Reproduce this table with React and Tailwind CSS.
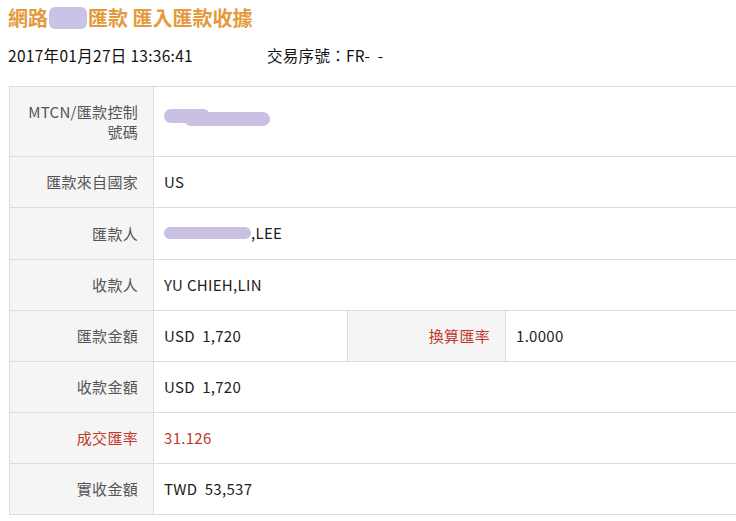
import React from "react";

const font = { fontFamily: '"Noto Sans CJK TC", "Noto Sans", sans-serif' };

function Blob({ className }) {
  return <span className={"inline-block bg-[#c9c0e4] rounded-full align-middle " + className} />;
}

function Label({ children, red }) {
  return (
    <td
      className={
        "bg-[#f5f5f5] border border-[#dddddd] text-right pr-[15px] pl-3 align-middle leading-[20px] tracking-[0.3px] " +
        (red ? "text-[#c0392b]" : "text-[#555555]")
      }
    >
      {children}
    </td>
  );
}

function Value({ children, red, colSpan }) {
  return (
    <td
      colSpan={colSpan}
      className={
        "border border-[#dddddd] pl-[10px] align-middle tracking-[0.3px] " +
        (red ? "text-[#c0392b]" : "text-[#222222]")
      }
    >
      {children}
    </td>
  );
}

export default function App() {
  return (
    <div className="w-[736px] h-[521px] overflow-hidden bg-white" style={font}>
      <h1 className="pl-2 pt-[3px] h-[32px] text-[20px] font-bold text-[#e49a3c] leading-[28px] flex items-center">
        網路
        <span className="inline-block w-[38px] h-[22px] bg-[#cbc3e6] rounded-[6px] mx-[1px]" />
        匯款 匯入匯款收據
      </h1>
      <div className="flex pl-2 h-[48px] items-center text-[15.5px] text-[#111111] tracking-[0.3px]">
        <span className="w-[259px]">2017年01月27日 13:36:41</span>
        <span>交易序號：FR- &nbsp;-</span>
      </div>
      <table className="ml-[9px] w-[740px] table-fixed border-collapse text-[15px] mt-[6px]">
        <colgroup>
          <col className="w-[144px]" />
          <col className="w-[194px]" />
          <col className="w-[158px]" />
          <col />
        </colgroup>
        <tbody>
          <tr className="h-[70px]">
            <Label>MTCN/匯款控制號碼</Label>
            <Value colSpan={3}>
              <span className="relative inline-block w-[110px] h-[18px] -mt-[4px]">
                <Blob className="absolute left-0 top-0 w-[46px] h-[14px]" />
                <Blob className="absolute left-[20px] top-[3px] w-[86px] h-[14px]" />
              </span>
            </Value>
          </tr>
          <tr className="h-[51px]">
            <Label>匯款來自國家</Label>
            <Value colSpan={3}>US</Value>
          </tr>
          <tr className="h-[52px]">
            <Label>匯款人</Label>
            <Value colSpan={3}>
              <span className="inline-flex items-center">
                <Blob className="w-[87px] h-[12px]" />
                <span>,LEE</span>
              </span>
            </Value>
          </tr>
          <tr className="h-[51px]">
            <Label>收款人</Label>
            <Value colSpan={3}>YU CHIEH,LIN</Value>
          </tr>
          <tr className="h-[51px]">
            <Label>匯款金額</Label>
            <Value>USD&nbsp; 1,720</Value>
            <Label red>換算匯率</Label>
            <Value>1.0000</Value>
          </tr>
          <tr className="h-[51px]">
            <Label>收款金額</Label>
            <Value colSpan={3}>USD&nbsp; 1,720</Value>
          </tr>
          <tr className="h-[51px]">
            <Label red>成交匯率</Label>
            <Value colSpan={3} red>31.126</Value>
          </tr>
          <tr className="h-[51px]">
            <Label>實收金額</Label>
            <Value colSpan={3}>TWD&nbsp; 53,537</Value>
          </tr>
        </tbody>
      </table>
    </div>
  );
}
